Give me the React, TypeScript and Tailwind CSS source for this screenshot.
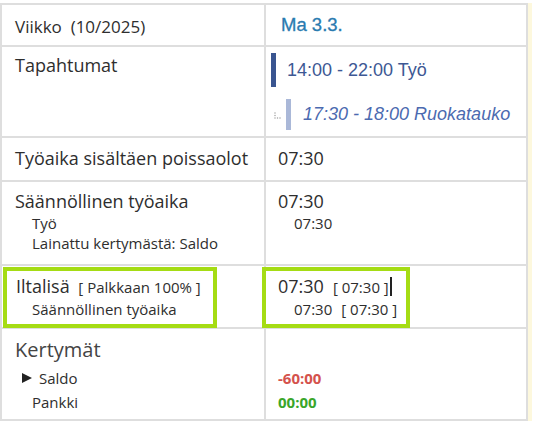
import React from 'react';

const sans = "font-['Open_Sans',sans-serif]";
const arial = "font-['Liberation_Sans',Arial,sans-serif]";

function Row({ left, right, h, last }: { left: React.ReactNode; right: React.ReactNode; h: string; last?: boolean }) {
  return (
    <div className={`flex ${h} ${last ? '' : 'border-b-2 border-[#dedede]'}`}>
      <div className="w-[264px] shrink-0 border-r-2 border-[#dedede]">{left}</div>
      <div className="flex-1 min-w-0">{right}</div>
    </div>
  );
}

function Dots() {
  return (
    <svg width="8" height="8" viewBox="0 0 8 8" className="shrink-0">
      {[
        [1, 1],
        [1, 3.5],
        [1, 6],
        [3.5, 6],
        [6, 6],
      ].map(([x, y], i) => (
        <rect key={i} x={x - 0.6} y={y - 0.6} width="1.2" height="1.2" fill="#9a9a9a" />
      ))}
    </svg>
  );
}

export default function App() {
  return (
    <div className={`bg-white w-[536px] h-[428px] pt-[3px] text-[#2e2e2e] ${sans}`}>
      <div className="flex">
        <div className="w-[528px] border-2 border-[#dedede]">
          {/* week header */}
          <Row
            h="h-[42px]"
            left={<div className="pl-[13px] pt-[10px] text-[17px] leading-[23px]">Viikko&nbsp; (10/2025)</div>}
            right={
              <div className={`pl-[15px] pt-[9px] text-[18.5px] leading-[22px] text-[#2a7bb0] [-webkit-text-stroke:0.3px_#2a7bb0] ${arial}`}>
                Ma 3.3.
              </div>
            }
          />
          {/* events */}
          <Row
            h="h-[91px]"
            left={<div className="pl-[13px] pt-[6px] text-[18px] leading-[24px]">Tapahtumat</div>}
            right={
              <div className={`pl-[5px] pt-[6px] ${arial}`}>
                <div className="flex items-center h-[34px]">
                  <div className="w-[5px] h-full bg-[#3a5590]" />
                  <span className="ml-[11px] text-[18px] text-[#3d5894]">14:00 - 22:00 Työ</span>
                </div>
                <div className="flex items-center h-[31px] mt-[12px] ml-[3px]">
                  <div className="self-end mb-[10px]">
                    <Dots />
                  </div>
                  <div className="ml-[4px] w-[5px] h-full bg-[#aab8d8]" />
                  <span className="ml-[12px] text-[18px] italic text-[#4b6ab0]">17:30 - 18:00 Ruokatauko</span>
                </div>
              </div>
            }
          />
          {/* total */}
          <Row
            h="h-[44px]"
            left={<div className="pl-[13px] pt-[8px] text-[18px] leading-[24px]">Työaika sisältäen poissaolot</div>}
            right={<div className="pl-[12px] pt-[8px] text-[18px] leading-[24px]">07:30</div>}
          />
          {/* regular */}
          <Row
            h="h-[84px]"
            left={
              <div className="pl-[13px] pt-[7px]">
                <div className="text-[18px] leading-[24px]">Säännöllinen työaika</div>
                <div className="pl-[17px] text-[15px] leading-[20px]">Työ</div>
                <div className="pl-[17px] text-[15px] leading-[20px]">Lainattu kertymästä: Saldo</div>
              </div>
            }
            right={
              <div className="pl-[12px] pt-[7px]">
                <div className="text-[18px] leading-[24px]">07:30</div>
                <div className="pl-[16px] text-[15px] leading-[20px]">07:30</div>
              </div>
            }
          />
          {/* evening supplement, highlighted */}
          <Row
            h="h-[63px]"
            left={
              <div className="pt-[1px] pl-[1px]">
                <div className="w-[214px] border-4 border-[#a5dc14] pl-[9px] pt-[3px] pb-[5px]">
                  <div className="text-[18px] leading-[24px]">
                    Iltalisä <span className="ml-[4px] text-[15px]">[ Palkkaan 100% ]</span>
                  </div>
                  <div className="pl-[16px] text-[15px] leading-[20px]">Säännöllinen työaika</div>
                </div>
              </div>
            }
            right={
              <div className="pt-[1px] -ml-[4px]">
                <div className="relative w-[148px] border-4 border-[#a5dc14] pl-[12px] pt-[3px] pb-[5px]">
                  <div className="flex items-baseline text-[18px] leading-[24px]">
                    07:30
                    <span className="ml-[9px] text-[15px]">[ 07:30 ]</span>
                    <span className="ml-[1px] w-[2px] h-[19px] bg-[#222] self-center" />
                  </div>
                  <div className="pl-[16px] text-[15px] leading-[20px]">
                    07:30<span className="ml-[9px]">[ 07:30 ]</span>
                  </div>
                </div>
              </div>
            }
          />
          {/* accumulations */}
          <Row
            h="h-[90px]"
            last
            left={
              <div className="pl-[13px] pt-[8px]">
                <div className="text-[20px] leading-[26px] text-[#444]">Kertymät</div>
                <div className="mt-[3px] pl-[7px] flex items-center text-[15px] leading-[24px]">
                  <svg width="10" height="10" viewBox="0 0 10 10" className="shrink-0">
                    <path d="M0 0 L10 5 L0 10 Z" fill="#222" />
                  </svg>
                  <span className="ml-[7px]">Saldo</span>
                </div>
                <div className="pl-[17px] text-[15px] leading-[24px]">Pankki</div>
              </div>
            }
            right={
              <div className="pl-[12px] pt-[37px] text-[15px] leading-[24px] font-bold">
                <div className="text-[#d4524c]">-60:00</div>
                <div className="text-[#3aa62a]">00:00</div>
              </div>
            }
          />
        </div>
        <div className="w-[4px] bg-[#fdf8dd]" />
      </div>
    </div>
  );
}
